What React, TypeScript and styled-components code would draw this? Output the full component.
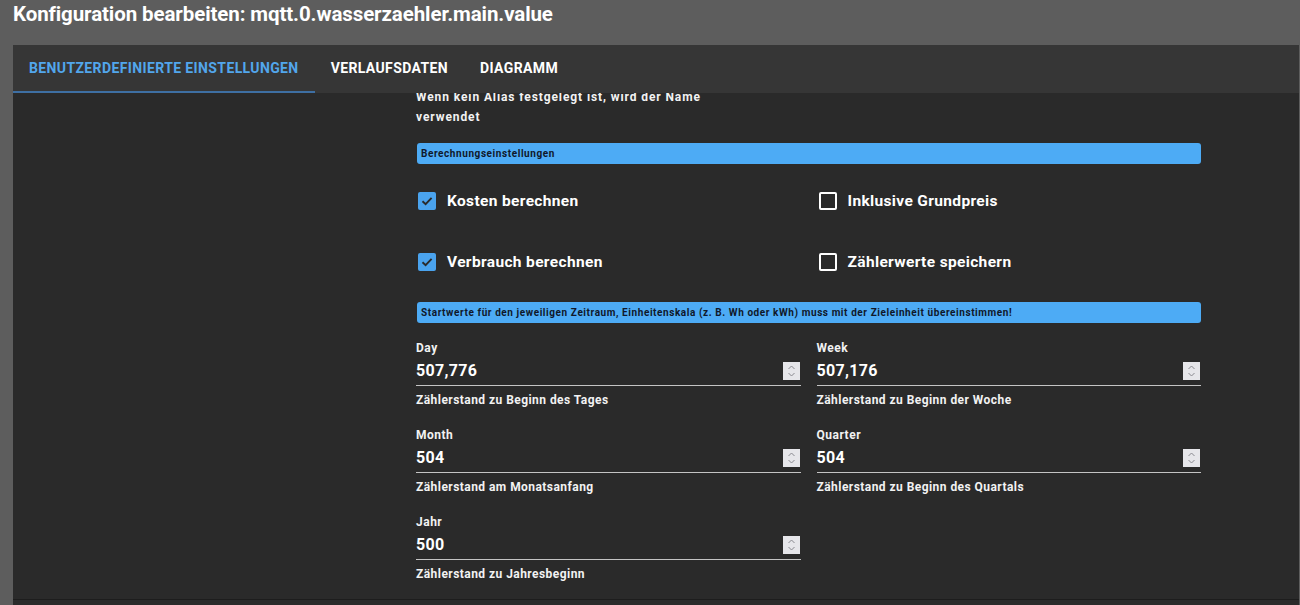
import React from 'react';
import styled, {createGlobalStyle} from "styled-components";

const GlobalStyle = createGlobalStyle`
  html, body {
    margin: 0;
    padding: 0;
    background: #5d5d5d;
    font-family: Roboto, "Liberation Sans", Arial, sans-serif;
    overflow: hidden;
  }
`

const tabs = ["Benutzerdefinierte Einstellungen", "Verlaufsdaten", "Diagramm"];

const fields = [
    {label: "Day", value: "507,776", helper: "Zählerstand zu Beginn des Tages"},
    {label: "Week", value: "507,176", helper: "Zählerstand zu Beginn der Woche"},
    {label: "Month", value: "504", helper: "Zählerstand am Monatsanfang"},
    {label: "Quarter", value: "504", helper: "Zählerstand zu Beginn des Quartals"},
    {label: "Jahr", value: "500", helper: "Zählerstand zu Jahresbeginn"},
];

const Check = ({checked}: { checked: boolean }) => (
    <CheckBox $checked={checked}>
        {checked && (
            <svg width="14" height="14" viewBox="0 0 14 14">
                <path d="M2.5 7.2 L5.6 10.2 L11.6 3.8" fill="none" stroke="#2a2a2a" strokeWidth="1.9"/>
            </svg>
        )}
    </CheckBox>
);

const Spinner = () => (
    <SpinBox>
        <svg width="17" height="18" viewBox="0 0 17 18">
            <path d="M5.5 7 L8.5 4 L11.5 7" fill="none" stroke="#8a8a90" strokeWidth="1"/>
            <path d="M5.5 11 L8.5 14 L11.5 11" fill="none" stroke="#8a8a90" strokeWidth="1"/>
        </svg>
    </SpinBox>
);

export default function App() {
    return (
        <>
            <GlobalStyle/>
            <Title>Konfiguration bearbeiten: mqtt.0.wasserzaehler.main.value</Title>
            <Panel>
                <TabBar>
                    {tabs.map((t, i) => (
                        <Tab key={t} $active={i === 0}>{t}</Tab>
                    ))}
                </TabBar>
                <Content>
                    <Form>
                        <Note>Wenn kein Alias festgelegt ist, wird der Name verwendet</Note>

                        <SectionBar>Berechnungseinstellungen</SectionBar>
                        <CheckGrid>
                            <CheckRow><Check checked/>Kosten berechnen</CheckRow>
                            <CheckRow><Check checked={false}/>Inklusive Grundpreis</CheckRow>
                            <CheckRow><Check checked/>Verbrauch berechnen</CheckRow>
                            <CheckRow><Check checked={false}/>Zählerwerte speichern</CheckRow>
                        </CheckGrid>

                        <SectionBar>Startwerte für den jeweiligen Zeitraum, Einheitenskala (z. B. Wh oder kWh) muss mit der Zieleinheit übereinstimmen!</SectionBar>
                        <FieldGrid>
                            {fields.map(f => (
                                <Field key={f.label}>
                                    <FieldLabel>{f.label}</FieldLabel>
                                    <InputRow>
                                        <Value>{f.value}</Value>
                                        <Spinner/>
                                    </InputRow>
                                    <Helper>{f.helper}</Helper>
                                </Field>
                            ))}
                        </FieldGrid>
                    </Form>
                </Content>
                <Bottom/>
            </Panel>
        </>
    );
}

const Title = styled.h1`
  margin: 0;
  height: 45px;
  padding: 0 13px;
  font-size: 20.5px;
  line-height: 28px;
  font-weight: 700;
  color: #ffffff;
  letter-spacing: -0.1px;
`

const Panel = styled.div`
  margin: 0 1px 0 13px;
  background: #2a2a2a;
  height: 560px;
  display: flex;
  flex-direction: column;
`

const TabBar = styled.div`
  display: flex;
  height: 48px;
  background: #363636;
  flex-shrink: 0;
`

const Tab = styled.div<{ $active: boolean }>`
  padding: 0 16px;
  display: flex;
  align-items: center;
  font-size: 14px;
  font-weight: 700;
  text-transform: uppercase;
  letter-spacing: 0.38px;
  color: ${p => p.$active ? "#52a6ec" : "#ffffff"};
  border-bottom: 2px solid ${p => p.$active ? "#3e6fa3" : "transparent"};
  box-sizing: border-box;
`

const Content = styled.div`
  height: 506px;
  overflow: hidden;
  flex-shrink: 0;
`

const Form = styled.div`
  width: 785px;
  margin-left: 403px;
  margin-top: -5px;
`

const Note = styled.div`
  max-width: 300px;
  font-size: 12px;
  line-height: 19.5px;
  font-weight: 700;
  letter-spacing: 0.9px;
  color: #f2f2f2;
`

const SectionBar = styled.div`
  margin-top: 16px;
  height: 21px;
  margin-left: 1px;
  padding: 0 4px;
  border-radius: 3px;
  background: #4dabf5;
  color: #10182a;
  font-size: 10px;
  font-weight: 700;
  letter-spacing: 0.58px;
  line-height: 21px;
  white-space: nowrap;
`

const CheckGrid = styled.div`
  display: grid;
  grid-template-columns: 1fr 1fr;
  column-gap: 16px;
  row-gap: 19px;
  margin: 16px 0 19px;
`

const CheckRow = styled.label`
  display: flex;
  align-items: center;
  gap: 11px;
  height: 42px;
  padding-left: 2px;
  font-size: 15.5px;
  font-weight: 700;
  letter-spacing: 0.35px;
  color: #ffffff;
`

const CheckBox = styled.span<{ $checked: boolean }>`
  width: 18px;
  height: 18px;
  box-sizing: border-box;
  border-radius: 2px;
  display: flex;
  align-items: center;
  justify-content: center;
  background: ${p => p.$checked ? "#4aa3ee" : "transparent"};
  border: ${p => p.$checked ? "none" : "2px solid #ffffff"};
`

const FieldGrid = styled.div`
  display: grid;
  grid-template-columns: 1fr 1fr;
  column-gap: 16px;
  row-gap: 19px;
  margin-top: 17px;
`

const Field = styled.div`
  display: flex;
  flex-direction: column;
`

const FieldLabel = styled.div`
  font-size: 12px;
  line-height: 16px;
  font-weight: 700;
  letter-spacing: 0.5px;
  color: #f2f2f2;
`

const InputRow = styled.div`
  height: 29px;
  display: flex;
  align-items: center;
  justify-content: space-between;
  border-bottom: 1px solid #c4c4c4;
`

const Value = styled.span`
  font-size: 16px;
  font-weight: 700;
  letter-spacing: 0.3px;
  color: #ffffff;
`

const SpinBox = styled.span`
  width: 17px;
  height: 18px;
  margin-right: 1px;
  background: #e6e6ea;
  display: flex;
`

const Helper = styled.div`
  margin-top: 6px;
  font-size: 12px;
  line-height: 16px;
  font-weight: 700;
  letter-spacing: 0.45px;
  color: #f2f2f2;
`

const Bottom = styled.div`
  flex: 1;
  border-top: 1px solid #1d1d1d;
  background: #2b2b2b;
`
